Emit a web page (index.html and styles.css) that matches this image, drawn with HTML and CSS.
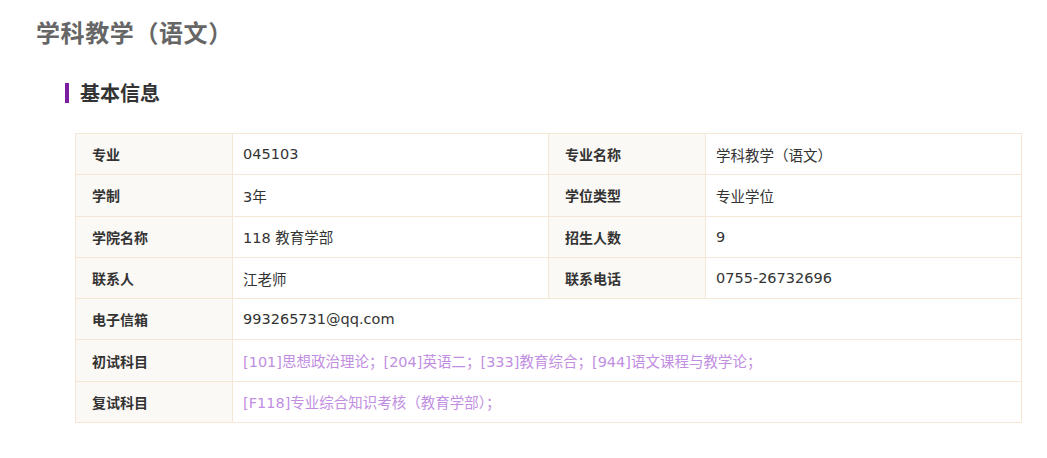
FILE: index.html
```html
<!DOCTYPE html>
<html lang="zh-CN">
<head>
<meta charset="utf-8">
<title>学科教学（语文）</title>
<link rel="stylesheet" href="styles.css">
</head>
<body>
<div class="page">
  <h1 class="title">学科教学（语文）</h1>
  <h2 class="section-title">基本信息</h2>
  <table class="info">
    <colgroup>
      <col class="c-label"><col class="c-value"><col class="c-label"><col class="c-value">
    </colgroup>
    <tr><th>专业</th><td>045103</td><th>专业名称</th><td>学科教学（语文）</td></tr>
    <tr><th>学制</th><td>3年</td><th>学位类型</th><td>专业学位</td></tr>
    <tr><th>学院名称</th><td>118 教育学部</td><th>招生人数</th><td>9</td></tr>
    <tr><th>联系人</th><td>江老师</td><th>联系电话</th><td>0755-26732696</td></tr>
    <tr><th>电子信箱</th><td colspan="3">993265731@qq.com</td></tr>
    <tr><th>初试科目</th><td colspan="3" class="link">[101]思想政治理论；[204]英语二；[333]教育综合；[944]语文课程与教学论；</td></tr>
    <tr><th>复试科目</th><td colspan="3" class="link">[F118]专业综合知识考核（教育学部）；</td></tr>
  </table>
</div>
</body>
</html>
```
FILE: styles.css
```css
* { box-sizing: border-box; }
body {
  margin: 0;
  background: #fff;
  font-family: "DejaVu Sans", "Noto Sans CJK SC", sans-serif;
  color: #333;
}
.page {
  padding: 15px 26px 0 36px;
}
.title {
  margin: 0;
  font-family: "Noto Sans CJK SC", sans-serif;
  font-size: 24px;
  letter-spacing: 0.6px;
  line-height: 34px;
  font-weight: bold;
  color: #666;
}
.section-title {
  margin: 34px 0 0 29px;
  padding-left: 11px;
  border-left: 4px solid #7b1fa2;
  font-family: "Noto Sans CJK SC", sans-serif;
  font-size: 20px;
  line-height: 20px;
  font-weight: bold;
  color: #333;
}
.info {
  margin: 30px 0 0 39px;
  width: 946px;
  border-collapse: collapse;
  table-layout: fixed;
  font-size: 14px;
}
.c-label { width: 157px; }
.c-value { width: 316px; }
.info th, .info td {
  border: 1px solid #f5e6d6;
  height: 41.3px;
  padding: 0;
  vertical-align: middle;
  text-align: left;
  white-space: nowrap;
}
.info th {
  background: #fbf9f5;
  font-family: "Noto Sans CJK SC", sans-serif;
  font-weight: bold;
  padding-left: 16px;
  color: #333;
}
.info td {
  padding-left: 10px;
  font-size: 14.5px;
  color: #333;
}
.info td.link {
  color: #c18ee2;
}
```
